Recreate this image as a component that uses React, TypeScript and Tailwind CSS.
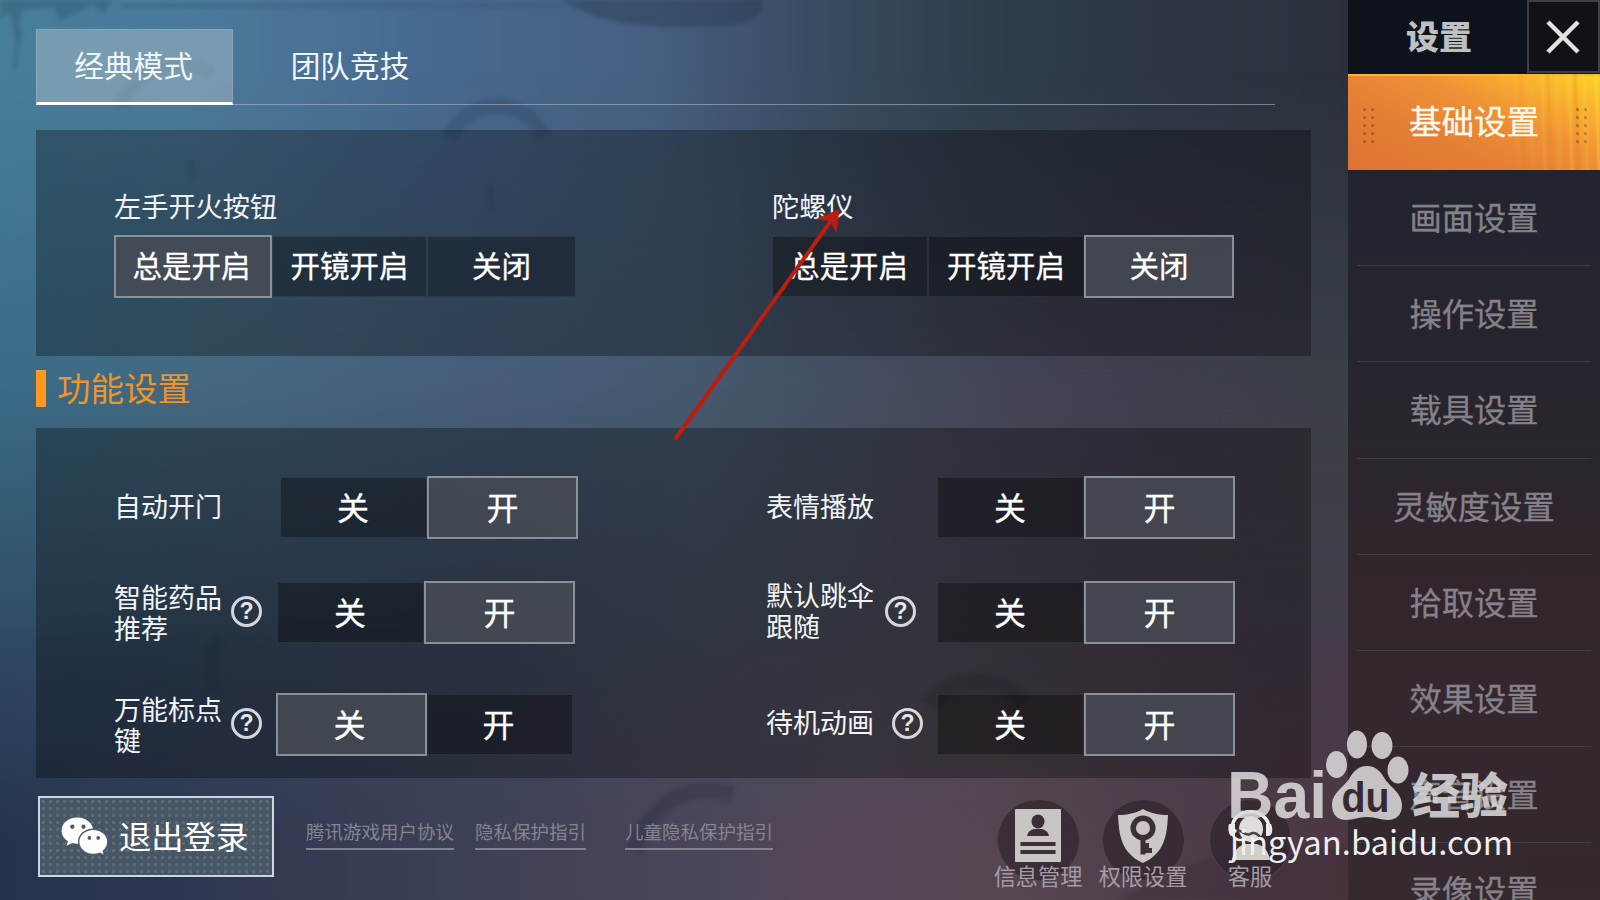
import type { ReactNode } from 'react'
import clsx from 'clsx'

type Option = { label: string; on?: boolean; width: string }

type Setting = {
  label: string
  help?: string
  labelWidth: string
  nudge: string
  options: Option[]
}

const fireButton: Option[] = [
  { label: '总是开启', on: true, width: 'w-[158px] pr-[3px]' },
  { label: '开镜开启', width: 'w-[155px]' },
  { label: '关闭', width: 'w-[149px]' },
]

const gyroscope: Option[] = [
  { label: '总是开启', width: 'w-[156px] pr-[2px]' },
  { label: '开镜开启', width: 'w-[156px]' },
  { label: '关闭', on: true, width: 'w-[150px]' },
]

const off: Option = { label: '关', width: 'w-[147px] pr-[1px]' }
const on: Option = { label: '开', on: true, width: 'w-[151px]' }

const rows: { className: string; left: Setting; right: Setting }[] = [
  {
    className: '',
    left: {
      label: '自动开门',
      labelWidth: 'w-[165px]',
      nudge: 'pb-[4px]',
      options: [off, on],
    },
    right: {
      label: '表情播放',
      labelWidth: 'w-[170px]',
      nudge: 'pb-[4px]',
      options: [off, on],
    },
  },
  {
    className: 'mt-[42px]',
    left: {
      label: '智能药品推荐',
      help: 'ml-[8px]',
      labelWidth: 'w-[162px]',
      nudge: 'pb-[1px]',
      options: [off, on],
    },
    right: {
      label: '默认跳伞跟随',
      help: 'ml-[10px]',
      labelWidth: 'w-[170px]',
      nudge: 'pb-[6px]',
      options: [off, on],
    },
  },
  {
    className: 'mt-[49px]',
    left: {
      label: '万能标点键',
      help: 'ml-[8px]',
      labelWidth: 'w-[161px]',
      nudge: 'pb-[2px]',
      options: [
        { label: '关', on: true, width: 'w-[151px] pr-[4px]' },
        { label: '开', width: 'w-[146px] pr-[3px]' },
      ],
    },
    right: {
      label: '待机动画',
      help: 'ml-[17px]',
      labelWidth: 'w-[170px]',
      nudge: 'pb-[6px]',
      options: [off, on],
    },
  },
]

const menu = [
  '画面设置',
  '操作设置',
  '载具设置',
  '灵敏度设置',
  '拾取设置',
  '效果设置',
  '声音设置',
  '录像设置',
]

const agreements = [
  { label: '腾讯游戏用户协议', className: 'ml-[32px] w-[148px]' },
  { label: '隐私保护指引', className: 'ml-[21px] w-[111px]' },
  { label: '儿童隐私保护指引', className: 'ml-[39px] w-[148px]' },
]

function Segmented({ options, large }: { options: Option[]; large?: boolean }) {
  return (
    <div className="flex h-[63px] shrink-0 items-center">
      {options.map((option) => (
        <button
          key={option.label}
          className={clsx(
            'flex shrink-0 items-center justify-center pb-[4px] text-white [-webkit-text-stroke:0.300px_#fff]',
            option.width,
            large ? 'text-[32px]' : 'text-[29.500px]',
            option.on
              ? 'h-[63px] border-2 border-[#a3a8b0]/75 bg-[#464b55]/85'
              : 'h-[61px] border border-white/8 bg-black/32',
          )}
        >
          {option.label}
        </button>
      ))}
    </div>
  )
}

function SettingCell({ setting }: { setting: Setting }) {
  return (
    <div className="flex w-[652px] shrink-0 items-center">
      <div className={clsx('flex shrink-0 items-center', setting.labelWidth)}>
        <span
          className={clsx(
            '-ml-[1px] w-[109px] shrink-0 text-[27px] leading-[31px] break-all text-[#f1f4f6]',
            setting.nudge,
          )}
        >
          {setting.label}
        </span>
        {setting.help && (
          <span
            className={clsx(
              'mb-[2px] flex h-[31px] w-[31px] shrink-0 items-center justify-center rounded-full border-[3px] border-[#d5d8db] font-["Liberation_Sans"] text-[23px] leading-none font-bold text-[#e4e6e8]',
              setting.help,
            )}
          >
            ?
          </span>
        )}
      </div>
      <Segmented options={setting.options} large />
    </div>
  )
}

function Backdrop() {
  return (
    <div className="absolute inset-0 -z-10">
      <div className="absolute inset-0 bg-[linear-gradient(90deg,#467f99_0%,#4b7a9b_12%,#47698f_28%,#455f80_41%,#3a4d64_50%,#2e3d4b_62%,#2c3441_75%,#2b303c_85%)]" />
      <div className="absolute inset-0 bg-[linear-gradient(90deg,#3a6b87_0%,#44687f_12%,#465c79_30%,#45596e_43%,#44495b_58%,#403f50_70%,#3b4047_82%)] [mask-image:linear-gradient(180deg,transparent_8%,#000_43%)]" />
      <div className="absolute inset-0 bg-[linear-gradient(90deg,#2f4b63_0%,#35495f_12%,#3b475d_30%,#464d5d_45%,#494954_58%,#483f4b_70%,#463d4a_82%)] [mask-image:linear-gradient(180deg,transparent_43%,#000_72%)]" />
      <div className="absolute inset-0 bg-[linear-gradient(90deg,#26324c_0%,#2e3751_12%,#3c4055_28%,#4a4559_43%,#574757_54%,#54454f_64%,#4d3d49_75%,#4c3743_84%)] [mask-image:linear-gradient(180deg,transparent_70%,#000_94%)]" />
      {/* brush strokes and stains on the wall */}
      <svg
        viewBox="0 0 1600 900"
        className="absolute inset-0 h-full w-full blur-[2px]"
        fill="none"
      >
        <path
          d="M560 0H762C766 14 755 27 700 27C630 28 600 22 560 0Z"
          fill="#26384a"
          fillOpacity="0.4"
        />
        <path
          d="M0 0H112L104 14L92 5L78 12L60 22L54 7L22 10L16 44L10 12L0 20Z"
          fill="#23465a"
          fillOpacity="0.28"
        />
        <path d="M120 6H560" stroke="#2c4c66" strokeOpacity="0.3" strokeWidth="4" />
        <path
          d="M450 137C466 96 528 96 544 137"
          stroke="#24384e"
          strokeOpacity="0.25"
          strokeWidth="15"
        />
        <path
          d="M120 106C140 60 190 56 212 74"
          stroke="#24485c"
          strokeOpacity="0.2"
          strokeWidth="14"
        />
        <path
          d="M732 794C690 782 650 800 634 852"
          stroke="#25293f"
          strokeOpacity="0.3"
          strokeWidth="16"
        />
        <path
          d="M930 706C948 676 1000 672 1024 704"
          stroke="#221f26"
          strokeOpacity="0.2"
          strokeWidth="18"
        />
        <path
          d="M215 690C206 664 210 650 222 640"
          stroke="#1c2c3a"
          strokeOpacity="0.2"
          strokeWidth="14"
        />
        <path
          d="M190 160L194 180M490 185L492 210M20 30L14 70"
          stroke="#1f3b4e"
          strokeOpacity="0.25"
          strokeWidth="4"
        />
        <path
          d="M1120 900C1200 850 1270 840 1348 850V900Z"
          fill="#33252f"
          fillOpacity="0.3"
        />
      </svg>
    </div>
  )
}

function WechatIcon() {
  return (
    <svg width="47" height="39" viewBox="0 0 48 40" className="shrink-0">
      <path
        d="M16.500 .5C7.400 .5 .5 6.600 .5 14C.5 18.500 3 22.300 7 24.800L5.500 29.500L11.200 26.700C13 27.200 15 27.500 17 27.400C26 27.200 33 21.200 33 14C33 6.600 25.600 .5 16.500 .5Z"
        fill="#fff"
      />
      <ellipse
        cx="33"
        cy="25.500"
        rx="15"
        ry="13"
        fill="#fff"
        stroke="#52606e"
        strokeWidth="1.500"
      />
      <path d="M38 35L43.500 38.500L42 33Z" fill="#fff" />
      <circle cx="11.500" cy="10" r="2.200" fill="#4a5a66" />
      <circle cx="23" cy="10" r="2.200" fill="#4a5a66" />
      <circle cx="29" cy="21.500" r="1.900" fill="#4a5a66" />
      <circle cx="38" cy="21.500" r="1.900" fill="#4a5a66" />
    </svg>
  )
}

function InfoIcon() {
  return (
    <svg width="48" height="53" viewBox="0 0 48 53">
      <rect x="1" width="46" height="53" rx="1" fill="#c9c5c4" />
      <ellipse cx="24" cy="12.500" rx="6.500" ry="7" fill="#3b3036" />
      <path d="M13 27C14 22 18 20 21 20H27C30 20 34 22 35 27Z" fill="#3b3036" />
      <path d="M6.500 35H41.500M6.500 43H41.500" stroke="#3b3036" strokeWidth="3.800" />
    </svg>
  )
}

function ShieldIcon() {
  return (
    <svg width="50" height="54" viewBox="0 0 50 54">
      <path
        d="M25 0C18 4 9 6 0 6C1 26 3 44 25 54C47 44 49 26 50 6C41 6 32 4 25 0Z"
        fill="#cbc7c6"
      />
      <circle cx="25" cy="19" r="9.800" fill="none" stroke="#3b3036" strokeWidth="5.500" />
      <path d="M25 28V45.500M25 41.500H34M25 36.500H31" stroke="#3b3036" strokeWidth="5" />
    </svg>
  )
}

function ServiceIcon() {
  return (
    <svg width="48" height="51" viewBox="0 0 48 51">
      <path d="M6 50C7 41 13 36 19 34H31C38 36 43 42 44 50Z" fill="#d0d1c5" />
      <ellipse cx="25" cy="19" rx="12" ry="13" fill="#dedcdc" />
      <path
        d="M6 19C6 -4 43 -4 43 19"
        fill="none"
        stroke="#f2f0f0"
        strokeWidth="3.500"
      />
      <path
        d="M3 14H9V26H6C2 26 2 16 3 14ZM40 14H45C47 18 47 26 42 26H40Z"
        fill="#eceaea"
      />
      <path d="M7 25C9 30 14 31 20 29" fill="none" stroke="#eceaea" strokeWidth="2.500" />
      <path
        d="M11 20C16 20 20 27 24 24C29 21 33 25 35 29"
        fill="none"
        stroke="#4b4146"
        strokeWidth="2.500"
      />
    </svg>
  )
}

function Shortcut({
  label,
  className,
  children,
}: {
  label: string
  className?: string
  children: ReactNode
}) {
  return (
    <div className={clsx('flex w-[92px] flex-col items-center', className)}>
      <span className="flex h-[82px] w-[83px] items-center justify-center rounded-full border border-white/10 bg-[#2c2229]/65 pb-[9px]">
        {children}
      </span>
      <span className="-mt-[18px] text-[22.200px] leading-[24px] whitespace-nowrap text-[#a39da3]">
        {label}
      </span>
    </div>
  )
}

function Grip() {
  return (
    <div className="grid grid-cols-2 gap-x-[5px] gap-y-[5px] pt-[7px]">
      {Array.from({ length: 10 }, (_, i) => (
        <span key={i} className="h-[3px] w-[3px] rounded-full bg-[#a9561c]/80" />
      ))}
    </div>
  )
}

function Sidebar() {
  return (
    <aside className="flex w-[252px] shrink-0 flex-col bg-[linear-gradient(180deg,#22242d_18%,#26252e_40%,#2f252d_60%,#34272f_78%,#34292f_100%)]">
      <header className="flex h-[74px] shrink-0 bg-[#0e121b]">
        <h1 className="w-[179px] pt-[10px] pl-[58px] text-[33px] leading-[50px] font-black text-[#bfc0c2]">
          设置
        </h1>
        <button className="flex h-[73px] w-[73px] items-center justify-center border-2 border-[#3d4047] bg-[#111218] pr-[2px]">
          <svg width="34" height="34" viewBox="0 0 34 34" stroke="#e4e2dc" strokeWidth="4.500">
            <path d="M2 2L32 32M32 2L2 32" />
          </svg>
        </button>
      </header>
      <div className="relative flex h-[96px] shrink-0 items-center justify-between bg-[linear-gradient(205deg,#ffd428_0%,#f9b32f_18%,#ef9136_40%,#e57f35_65%,#dd7334_100%)] pr-[13px] pl-[15px] shadow-[inset_0_2px_0_#ffb52e]">
        {/* light streaks fading out towards the left */}
        <div className="absolute inset-0 bg-[repeating-linear-gradient(88deg,#ffe04a00_0_5px,#ffe04a55_8px,#ffe04a00_11px,#c0600030_14px,#c0600000_17px,#ffe04a33_23px,#ffe04a00_27px)] [mask-image:linear-gradient(75deg,transparent_58%,#000_95%)]" />
        <Grip />
        <span className="pr-[2px] pb-[4px] text-[32.500px] leading-none text-[#fffaf0] [-webkit-text-stroke:0.300px_#fffaf0]">
          基础设置
        </span>
        <Grip />
      </div>
      {menu.map((item) => (
        <div
          key={item}
          className="mx-[9px] flex h-[96.2px] shrink-0 items-center justify-center border-b border-[#3f3c44] pb-[3px] text-[32.300px] leading-none text-[#858188] [-webkit-text-stroke:0.300px_#858188]"
        >
          {item}
        </div>
      ))}
    </aside>
  )
}

function Watermark() {
  return (
    <svg
      width="300"
      height="150"
      viewBox="1220 725 300 150"
      className="absolute top-[725px] left-[1220px]"
      fill="#d9d7d9"
    >
      <g fillOpacity="0.88">
        <text
          x="1227"
          y="817.500"
          textLength="100"
          lengthAdjust="spacingAndGlyphs"
          className='font-["Liberation_Sans"] text-[66px] font-bold'
        >
          Bai
        </text>
        <ellipse cx="1336.500" cy="764.500" rx="10.500" ry="13.500" />
        <ellipse cx="1357" cy="744.500" rx="10" ry="14" />
        <ellipse cx="1382" cy="745.500" rx="10.500" ry="13.500" />
        <ellipse cx="1398" cy="770" rx="10.500" ry="13.500" />
        <path d="M1367 766C1376 766 1381 772 1385 779C1390 787 1402 793 1402 805C1402 815 1396 820 1388 820C1380 820 1376 817 1367 817C1358 817 1354 820 1346 820C1338 820 1332 815 1332 805C1332 793 1344 787 1349 779C1353 772 1358 766 1367 766Z" />
        <text
          x="1412"
          y="812.500"
          textLength="96"
          className='font-["Noto_Sans_CJK_SC"] text-[48px] font-black'
        >
          经验
        </text>
      </g>
      <text
        x="1341.500"
        y="811.500"
        textLength="48"
        lengthAdjust="spacingAndGlyphs"
        fill="#37292f"
        className='font-["Liberation_Sans"] text-[42px] font-bold'
      >
        du
      </text>
      <text
        x="1230"
        y="854.500"
        textLength="283"
        lengthAdjust="spacingAndGlyphs"
        fill="#f0eff0"
        className='font-["Noto_Sans_CJK_SC"] text-[33px]'
      >
        jingyan.baidu.com
      </text>
    </svg>
  )
}

export default function App() {
  return (
    <div className='relative isolate flex h-[900px] w-[1600px] overflow-hidden font-["Noto_Sans_CJK_SC",sans-serif]'>
      <Backdrop />

      <main className="flex w-[1348px] shrink-0 flex-col pt-[29px] pl-[36px]">
        <nav className="flex h-[76px] w-[1239px] shrink-0 border-b border-[#a9b9c9]/60 text-[29.700px] leading-none text-[#f0f5f8]">
          <button className="flex h-[76px] w-[197px] items-center justify-center border border-b-[3px] border-[#a9bcc9]/40 border-b-white bg-[#b3c3cb]/45 pr-[2px] pb-[3px]">
            经典模式
          </button>
          <button className="ml-[38px] flex h-[76px] w-[160px] items-center justify-center pr-[2px] pb-[5px]">
            团队竞技
          </button>
        </nav>

        <section className="mt-[25px] flex h-[226px] w-[1275px] shrink-0 bg-black/30 pt-[58px] pl-[78px]">
          <div className="w-[658px]">
            <h3 className="mb-[13px] text-[27.200px] leading-[34px] text-[#f1f4f6]">左手开火按钮</h3>
            <Segmented options={fireButton} />
          </div>
          <div>
            <h3 className="mb-[13px] text-[27.200px] leading-[34px] text-[#f1f4f6]">陀螺仪</h3>
            <Segmented options={gyroscope} />
          </div>
        </section>

        <h2 className="mt-[14px] flex h-[37px] shrink-0 items-center text-[33.500px] leading-none text-[#ef9428]">
          <span className="mr-[11px] h-[37px] w-[10px] bg-[#ff981f]" />
          <span className="pb-[3px]">功能设置</span>
        </h2>

        <section className="mt-[21px] h-[350px] w-[1275px] shrink-0 bg-black/30 pt-[48px] pl-[79px]">
          {rows.map((row) => (
            <div key={row.left.label} className={clsx('flex h-[63px] items-center', row.className)}>
              <SettingCell setting={row.left} />
              <SettingCell setting={row.right} />
            </div>
          ))}
        </section>

        <footer className="mt-[18px] flex shrink-0 items-start pl-[2px]">
          <button className="flex h-[81px] w-[236px] shrink-0 items-center border-2 border-[#ccd6e2] bg-[#475766] bg-[radial-gradient(#5c6c7a_1.200px,transparent_1.900px)] bg-[length:7px_7px] pl-[21px] text-[32.300px] leading-none text-white">
            <WechatIcon />
            <span className="ml-[11px] pb-[2px]">退出登录</span>
          </button>
          {agreements.map((link) => (
            <a
              key={link.label}
              className={clsx(
                'mt-[23px] block h-[31px] shrink-0 border-b-2 border-[#81818f] text-[18.500px] leading-[25px] whitespace-nowrap text-[#84858f]',
                link.className,
              )}
            >
              {link.label}
            </a>
          ))}
          <div className="mt-[3px] ml-[219px] flex">
            <Shortcut label="信息管理">
              <InfoIcon />
            </Shortcut>
            <Shortcut label="权限设置" className="ml-[13px]">
              <ShieldIcon />
            </Shortcut>
            <Shortcut label="客服" className="ml-[15px]">
              <ServiceIcon />
            </Shortcut>
          </div>
        </footer>
      </main>

      <Sidebar />

      <svg
        width="180"
        height="240"
        viewBox="670 205 180 240"
        className="absolute top-[205px] left-[670px]"
      >
        <path
          d="M676 438L835 215"
          stroke="#bd1c0e"
          strokeWidth="4"
          strokeLinecap="round"
        />
        <path d="M839.500 209L816 219L830 221L836.500 233Z" fill="#bd1c0e" />
      </svg>
      <Watermark />
    </div>
  )
}
